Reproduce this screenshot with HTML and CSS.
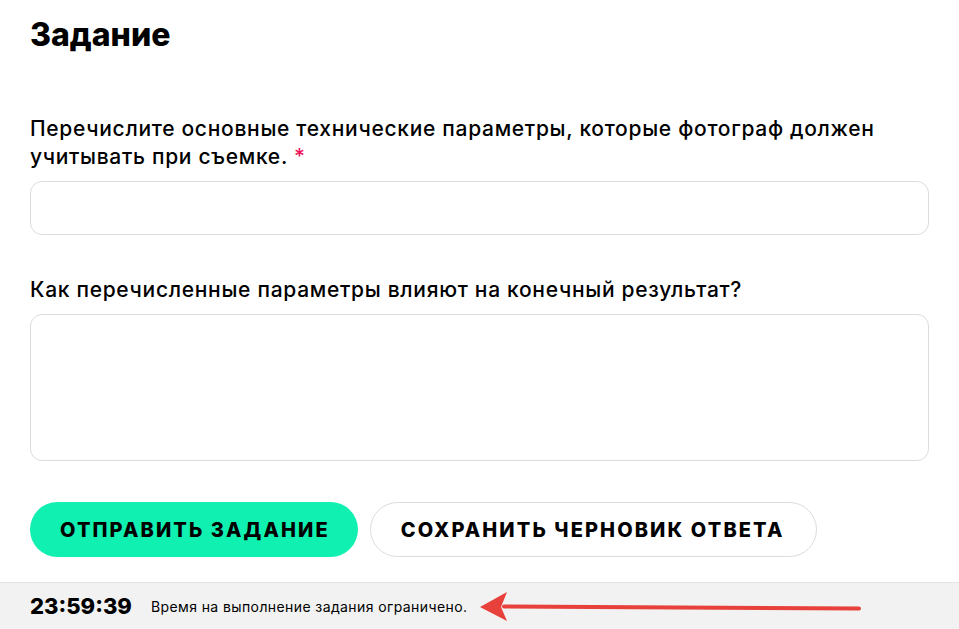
FILE: index.html
```html
<!DOCTYPE html>
<html lang="ru">
<head>
    <meta charset="UTF-8">
    <meta name="viewport" content="width=device-width, initial-scale=1.0">
    <title>Задание</title>
    <link rel="stylesheet" href="styles.css">
</head>
<body>

<main class="task">
    <h1>Задание</h1>

    <div class="field">
        <label for="params"><span class="label-text">Перечислите основные технические параметры, которые фотограф должен учитывать при съемке.</span> <span class="required">*</span></label>
        <input type="text" id="params">
    </div>

    <div class="field">
        <label for="influence">Как перечисленные параметры влияют на конечный результат?</label>
        <textarea id="influence"></textarea>
    </div>

    <div class="actions">
        <button class="btn btn-primary">Отправить задание</button>
        <button class="btn btn-outline">Сохранить черновик ответа</button>
    </div>
</main>

<footer class="timer-bar">
    <span class="timer">23:59:39</span>
    <span class="timer-note">Время на выполнение задания ограничено.</span>
    <svg class="arrow" width="390" height="32" viewBox="0 0 390 32">
        <path d="M 24 14.5 L 379 16.5" stroke="#e8403a" stroke-width="4" stroke-linecap="round" fill="none"/>
        <path d="M 0 15 L 27 0 L 21 15 L 27 29 Z" fill="#e8403a"/>
    </svg>
</footer>

</body>
</html>
```

FILE: styles.css
```css
body {
    font-family: Inter, "Noto Sans", Arial, sans-serif;
    margin: 0;
    padding: 0;
    background-color: #ffffff;
    color: #000000;
    display: flex;
    flex-direction: column;
    height: 100vh;
    overflow: hidden;
}

.task {
    padding: 0 30px;
}

h1 {
    font-size: 32px;
    font-weight: 800;
    line-height: 38px;
    margin: 16px 0 0;
}

.field {
    margin-top: 61px;
}

.field + .field {
    margin-top: 41px;
}

.field label {
    display: block;
    font-size: 21px;
    font-weight: 500;
    letter-spacing: 0.7px;
    line-height: 28px;
    margin-bottom: 10px;
}

.required {
    color: #f0145a;
    letter-spacing: 0;
}

input[type="text"], textarea {
    display: block;
    width: 100%;
    box-sizing: border-box;
    border: 1px solid #dcdcdc;
    border-radius: 12px;
    background-color: #ffffff;
    font-family: inherit;
    font-size: 18px;
    padding: 12px 16px;
    outline: none;
}

input[type="text"] {
    height: 54px;
}

textarea {
    height: 147px;
    resize: none;
}

.actions {
    display: flex;
    gap: 12px;
    margin-top: 41px;
}

.btn {
    height: 55px;
    border-radius: 28px;
    font-family: inherit;
    font-size: 20px;
    font-weight: 800;
    letter-spacing: 2.1px;
    text-transform: uppercase;
    color: #000000;
    padding: 0 28px 0 30px;
    cursor: pointer;
}

.btn-primary {
    background-color: #10f0b0;
    border: none;
}

.btn-outline {
    background-color: #ffffff;
    border: 1px solid #dcdcdc;
    padding: 0 32px 0 30px;
}

.timer-bar {
    margin-top: auto;
    position: relative;
    height: 46px;
    display: flex;
    align-items: center;
    gap: 19px;
    padding: 0 30px;
    background-color: #f2f2f2;
    border-top: 1px solid #e3e3e3;
}

.timer {
    font-size: 22px;
    font-weight: 800;
}

.timer-note {
    font-size: 14px;
    letter-spacing: 0.4px;
}

.arrow {
    position: absolute;
    left: 480px;
    top: 9px;
}
```
